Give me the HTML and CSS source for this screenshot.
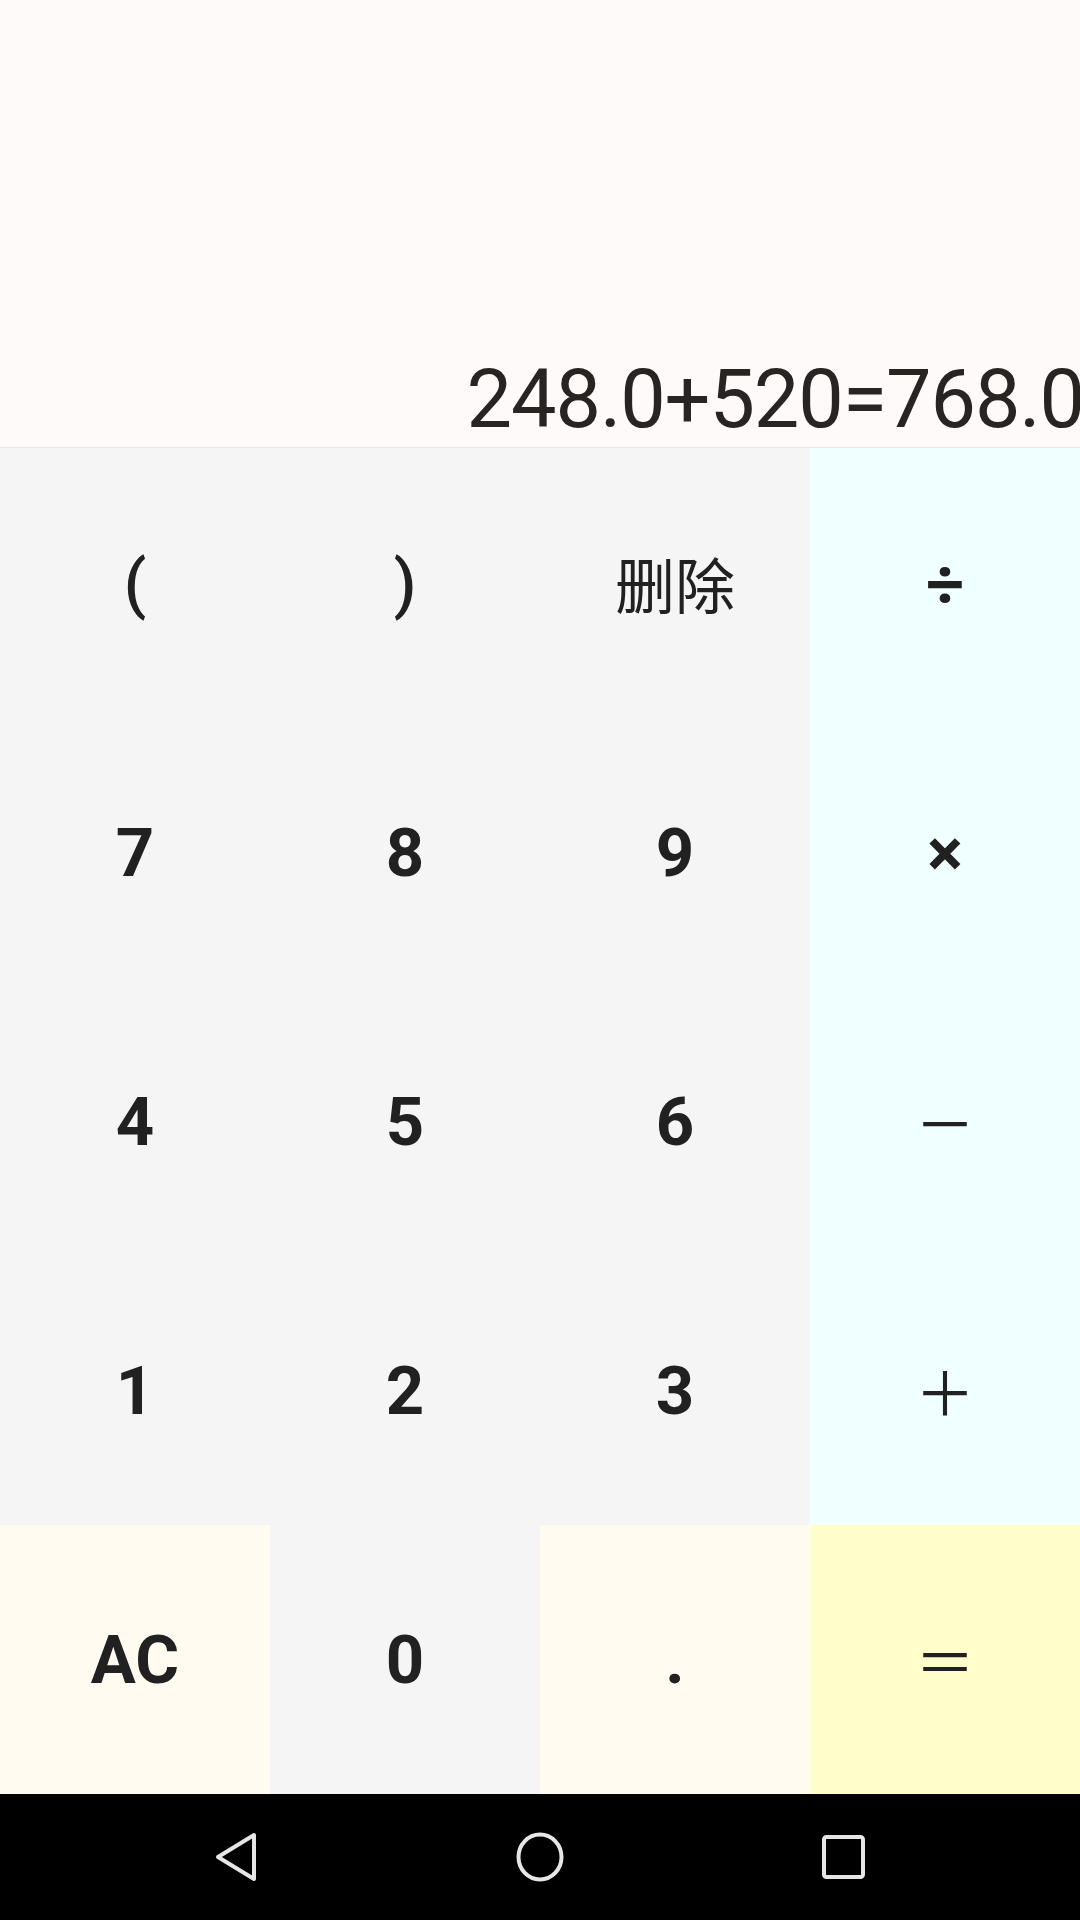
FILE: index.html
```html
<!DOCTYPE html>
<html lang="zh">
<head>
<meta charset="utf-8">
<title>Calculator</title>
<link rel="stylesheet" href="styles.css">
</head>
<body>
<div class="app">
  <div class="display">
    <span class="expr">248.0+520=768.0</span>
  </div>
  <div class="keypad">
    <div class="key gray paren">(</div>
    <div class="key gray paren">)</div>
    <div class="key gray cjk">删除</div>
    <div class="key op">÷</div>

    <div class="key gray">7</div>
    <div class="key gray">8</div>
    <div class="key gray">9</div>
    <div class="key op">×</div>

    <div class="key gray">4</div>
    <div class="key gray">5</div>
    <div class="key gray">6</div>
    <div class="key op thin">－</div>

    <div class="key gray">1</div>
    <div class="key gray">2</div>
    <div class="key gray">3</div>
    <div class="key op thin">＋</div>

    <div class="key cream">AC</div>
    <div class="key gray">0</div>
    <div class="key cream">.</div>
    <div class="key yellow thin">＝</div>
  </div>
  <div class="navbar">
    <div class="nav-item">
      <svg width="48" height="56" viewBox="0 0 48 56"><path d="M42 6 L42 50 L6 28 Z" fill="none" stroke="#e6e6e6" stroke-width="4" stroke-linejoin="round"/></svg>
    </div>
    <div class="nav-item">
      <svg width="56" height="56" viewBox="0 0 56 56"><ellipse cx="28" cy="28" rx="21.5" ry="22.5" fill="none" stroke="#e6e6e6" stroke-width="4"/></svg>
    </div>
    <div class="nav-item">
      <svg width="56" height="56" viewBox="0 0 56 56"><rect x="8" y="8" width="39" height="40" rx="2.5" fill="none" stroke="#e6e6e6" stroke-width="4"/></svg>
    </div>
  </div>
</div>
</body>
</html>
```

FILE: styles.css
```css
html, body {
  margin: 0;
  padding: 0;
}

body {
  width: 1080px;
  height: 1920px;
  overflow: hidden;
  font-family: Roboto, "Noto Sans CJK SC", sans-serif;
  color: #212121;
}

.app {
  display: flex;
  flex-direction: column;
  height: 1920px;
}

.display {
  flex: none;
  height: 448px;
  box-sizing: border-box;
  background: #fffafa;
  border-bottom: 1px solid #e8e6e6;
  display: flex;
  justify-content: flex-end;
  align-items: flex-end;
  overflow: hidden;
  padding-bottom: 7px;
}

.expr {
  font-family: Roboto, sans-serif;
  font-size: 81px;
  line-height: 1;
  letter-spacing: -1.1px;
  color: #282421;
  white-space: nowrap;
  margin-right: -4px;
}

.keypad {
  flex: 1;
  display: grid;
  grid-template-columns: repeat(4, 1fr);
  grid-template-rows: repeat(5, 1fr);
}

.key {
  display: flex;
  align-items: center;
  justify-content: center;
  font-family: Roboto, "Noto Sans CJK SC", sans-serif;
  font-weight: 700;
  font-size: 67px;
  color: #212121;
  line-height: 1;
  padding-top: 3px;
}

.gray { background: #f5f5f5; }
.op { background: #f0ffff; }
.cream { background: #fffbf0; }
.yellow { background: #ffffcc; }

.paren {
  font-family: Roboto, sans-serif;
  font-weight: 500;
  font-size: 65px;
}

.cjk {
  font-family: "Noto Sans CJK SC", sans-serif;
  font-weight: 400;
  font-size: 60px;
  padding-top: 0;
}

.thin {
  font-family: "Noto Sans CJK SC", sans-serif;
  font-weight: 400;
  font-size: 60px;
  padding-top: 0;
}

.navbar {
  flex: none;
  height: 126px;
  background: #000;
  display: flex;
  justify-content: center;
  align-items: center;
  gap: 184px;
}

.nav-item {
  width: 120px;
  height: 126px;
  display: flex;
  align-items: center;
  justify-content: center;
}
```
